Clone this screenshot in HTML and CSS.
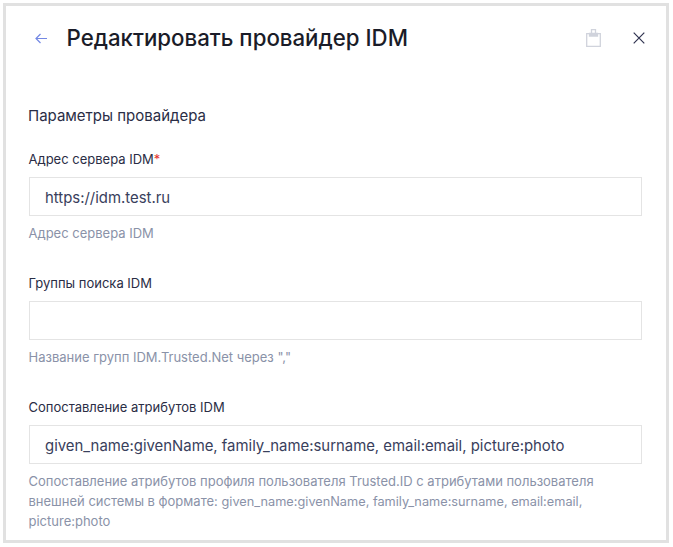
FILE: index.html
```html
<!DOCTYPE html>
<html lang="ru">
<head>
<meta charset="utf-8">
<title>Редактировать провайдер IDM</title>
<link rel="stylesheet" href="styles.css">
</head>
<body>
<main class="dialog">
  <header class="head">
    <button class="icon-btn back" aria-label="Назад">
      <svg width="12" height="11" viewBox="0 0 12 11" fill="none" stroke="#7488e4" stroke-width="1.200"><path d="M12 5.500H1M5.500 1 1 5.500 5.500 10"/></svg>
    </button>
    <h1 class="title">Редактировать провайдер IDM</h1>
    <span class="paste" aria-hidden="true">
      <svg width="15" height="18" viewBox="0 0 15 18" fill="none" stroke="#d0d3dc" stroke-width="1.300"><path d="M3.500 4.600H.7v12.700h13.600V4.600H11.500"/><path d="M3.500 4.500h8V7h-8z" fill="#d0d3dc"/><path d="M5.500 4.500V.7h4v3.800"/></svg>
    </span>
    <button class="icon-btn close" aria-label="Закрыть">
      <svg width="12" height="12" viewBox="0 0 12 12" fill="none" stroke="#2f3350" stroke-width="1.200"><path d="M.7.7l10.600 10.600M11.300.7.7 11.300"/></svg>
    </button>
  </header>
  <section class="body">
    <h2 class="section">Параметры провайдера</h2>
    <div class="field">
      <label class="label">Адрес сервера IDM<span class="req">*</span></label>
      <input class="input" type="text" value="https://idm.test.ru">
      <p class="hint">Адрес сервера IDM</p>
    </div>
    <div class="field">
      <label class="label">Группы поиска IDM</label>
      <input class="input" type="text" value="">
      <p class="hint">Название групп IDM.Trusted.Net через ","</p>
    </div>
    <div class="field">
      <label class="label">Сопоставление атрибутов IDM</label>
      <input class="input" type="text" value="given_name:givenName, family_name:surname, email:email, picture:photo">
      <p class="hint">Сопоставление атрибутов профиля пользователя Trusted.ID с атрибутами пользователя<br>внешней системы в формате: <span class="code">given_name:givenName, family_name:surname, email:email,</span><br>picture:photo</p>
    </div>
  </section>
</main>
</body>
</html>
```
FILE: styles.css
```css
* { box-sizing: border-box; }
html, body { margin: 0; background: #fff; }
body { padding: 3px; font-family: Inter, "Noto Sans", sans-serif; }
.dialog {
  width: 666px;
  height: 540px;
  border: 3px solid #e1e1e1;
  background: #fff;
  overflow: hidden;
}
.head {
  display: flex;
  align-items: center;
  height: 64px;
  padding: 0 21px 0 29px;
}
.icon-btn { display: flex; padding: 0; border: 0; background: none; }
.back { margin-right: 19.500px; }
.title { flex: 1; margin: 0; font-size: 22.250px; font-weight: 500; color: #1a1c28; line-height: 30px; }
.paste { display: flex; margin-right: 32px; }
.body { padding: 36px 24px 0 23px; }
.section { margin: 0 0 25px -1px; font-size: 15px; font-weight: 400; line-height: 20px; color: #2a2d45; }
.field { margin-bottom: 32px; }
.label { display: block; font-size: 13px; line-height: 16px; color: #2a2d45; margin: 0 0 10px -.5px; }
.req { color: #e5342e; }
.input {
  display: block;
  width: 100%;
  height: 39px;
  padding: 2px 15px 0;
  border: 1px solid #e4e4e4;
  border-radius: 0;
  outline: 0;
  font: 400 14.900px Inter, "Noto Sans", sans-serif;
  color: #39405c;
  background: #fff;
}
.hint { margin: 7px 0 0 -.5px; font-size: 13px; line-height: 20px; color: #8a92a8; }
.code { font-size: 12.750px; line-height: 1; }
```
